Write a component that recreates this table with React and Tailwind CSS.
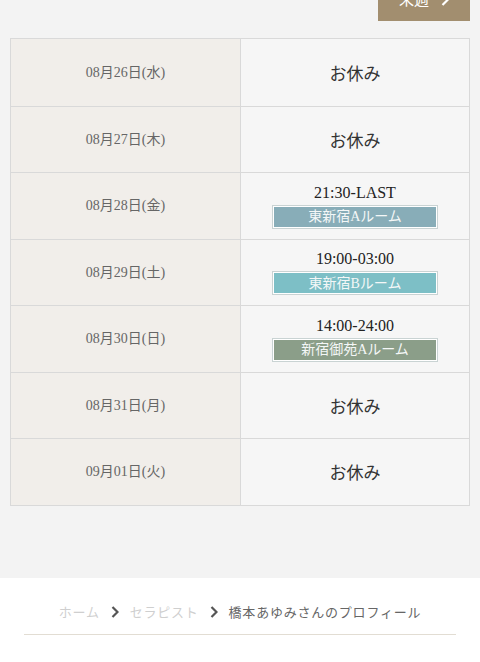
import React from "react";

const rows = [
  { date: "08月26日(水)" },
  { date: "08月27日(木)" },
  { date: "08月28日(金)", time: "21:30-LAST", room: "東新宿Aルーム", color: "bg-[#88adb8]" },
  { date: "08月29日(土)", time: "19:00-03:00", room: "東新宿Bルーム", color: "bg-[#7dbfc6]" },
  { date: "08月30日(日)", time: "14:00-24:00", room: "新宿御苑Aルーム", color: "bg-[#8b9e89]" },
  { date: "08月31日(月)" },
  { date: "09月01日(火)" },
];

const serif = { fontFamily: '"Liberation Serif", "Noto Sans CJK JP", serif' };

const Chevron = ({ className }) => (
  <svg width="8" height="12" viewBox="0 0 8 12" className={className}>
    <path d="M1.5 1 L6.5 6 L1.5 11" fill="none" stroke="currentColor" strokeWidth="2.2" />
  </svg>
);

const App = () => {
  return (
    <div className="w-[480px] h-[662px] overflow-hidden bg-white">
      {/* Schedule area */}
      <div className="bg-[#f3f3f3] pb-[72px]">
        {/* Next week button (cut off at top) */}
        <div className="flex justify-end pr-[10px] h-[21px] overflow-hidden">
          <button className="w-[92px] h-[42px] -mt-[21px] bg-[#a28e6f] text-white flex items-center justify-center gap-[12px] text-[15px]" style={serif}>
            <span>来週</span>
            <Chevron className="text-white" />
          </button>
        </div>

        {/* Table */}
        <div className="mx-[10px] mt-[17px] border border-[#d9d9d9]" style={serif}>
          {rows.map((r, i) => (
            <div key={i} className={`flex h-[66.5px] ${i > 0 ? "border-t border-[#d9d9d9]" : ""}`}>
              <div className="w-[230px] bg-[#f1eeea] border-r border-[#d9d9d9] flex items-center justify-center text-[14px] text-[#666]">
                {r.date}
              </div>
              <div className="flex-1 bg-[#f6f6f6] flex flex-col items-center justify-center">
                {r.time ? (
                  <>
                    <div className="text-[16px] leading-[20px] text-[#222]">{r.time}</div>
                    <div className="mt-[2px] border border-[#c9d3d3] bg-white p-[1px]">
                      <div className={`w-[162px] h-[20px] ${r.color} text-[#f4f7f7] text-[14px] flex items-center justify-center`}>
                        {r.room}
                      </div>
                    </div>
                  </>
                ) : (
                  <div className="text-[17px] text-[#333]" style={{ fontFamily: '"Noto Sans CJK JP", sans-serif' }}>お休み</div>
                )}
              </div>
            </div>
          ))}
        </div>
      </div>

      {/* Breadcrumb */}
      <div className="pt-[25px]">
        <div className="flex items-center justify-center gap-[11px] text-[13px] tracking-[0.06em]" style={serif}>
          <span className="text-[#cfcfcf]">ホーム</span>
          <Chevron className="text-[#555]" />
          <span className="text-[#cfcfcf]">セラピスト</span>
          <Chevron className="text-[#555]" />
          <span className="text-[#666]">橋本あゆみさんのプロフィール</span>
        </div>
        <div className="mx-[24px] mt-[12px] h-[1px] bg-[#e2ddd3]" />
      </div>
    </div>
  );
};

export default App;
